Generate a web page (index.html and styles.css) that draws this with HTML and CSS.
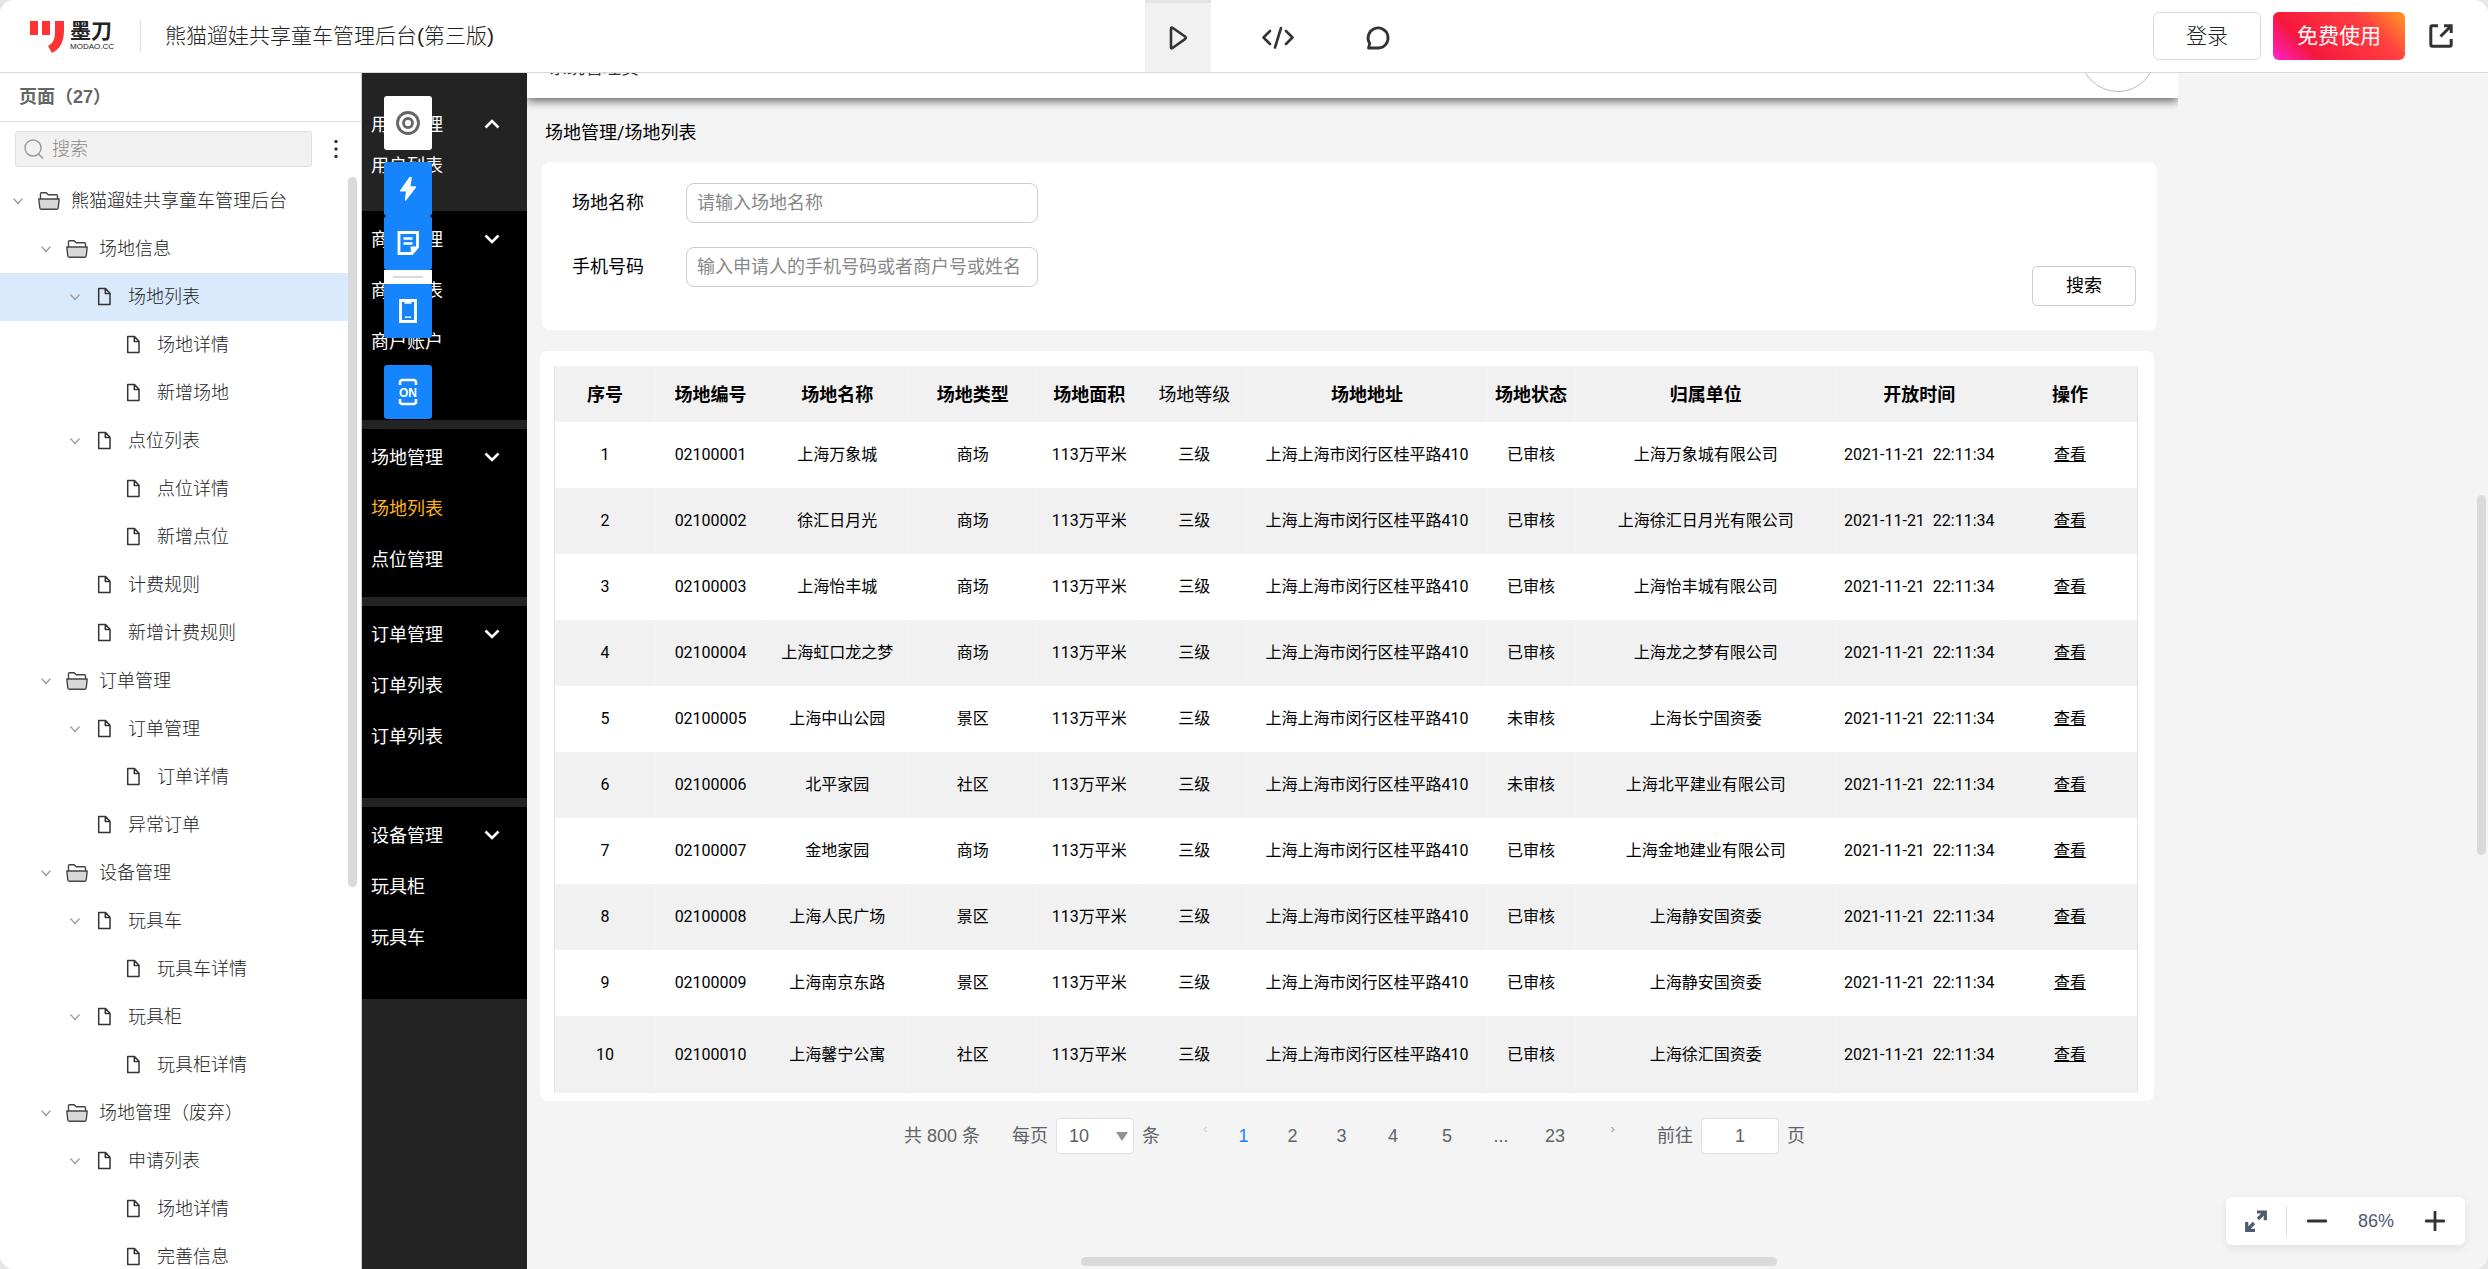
FILE: index.html
```html
<!DOCTYPE html>
<html lang="zh-CN">
<head>
<meta charset="utf-8">
<title>熊猫遛娃共享童车管理后台(第三版)</title>
<link rel="stylesheet" href="styles.css">
</head>
<body>
<svg class="sprite" aria-hidden="true">
  <symbol id="chevron" viewBox="0 0 12 12"><path d="M1.500 3.500 6 8.500l4.500-5" fill="none" stroke="#999" stroke-width="1.200"/></symbol>
  <symbol id="folder" viewBox="0 0 22 22"><path d="M2.500 9V3.800q0-1 1-1h4.700l2 2h8.300q1 0 1 1V9" fill="#fff" stroke="#444" stroke-width="1.400"/><path d="M.8 9h20.400l-1 9q-.2 1.200-1.400 1.200H3.200Q2 19.200 1.800 18z" fill="#d8d8d8" stroke="#444" stroke-width="1.400" stroke-linejoin="round"/></symbol>
  <symbol id="file" viewBox="0 0 22 22"><path d="M3.700 2.500h6.800L15 7.200v11.300H3.700zM10.300 2.500v5H15" fill="none" stroke="#333" stroke-width="1.500" stroke-linejoin="round"/></symbol>
  <symbol id="caret" viewBox="0 0 18 18"><path d="M2.500 4.500 9 11l6.500-6.500" fill="none" stroke="#fff" stroke-width="2.600"/></symbol>
  <symbol id="caret-up" viewBox="0 0 18 18"><path d="M2.500 11.500 9 5l6.500 6.500" fill="none" stroke="#fff" stroke-width="2.600"/></symbol>
</svg>
<div class="app">
  <header class="topbar">
    <div class="brand">
      <svg class="mark" width="34" height="33" viewBox="0 0 34 33"><path fill="#ff3333" d="M0 1h8v14H0zM12 1h8v14h-8zM25 1h9v9c0 12-4 19-12 23l-4-7c6-3 7-8 7-16z"/></svg>
      <div class="wordmark"><span class="word-cn">墨刀</span><span class="word-en">MODAO.CC</span></div>
      <h1 class="title">熊猫遛娃共享童车管理后台(第三版)</h1>
    </div>
    <nav class="modes">
      <button class="mode mode-active" aria-label="预览"><svg width="24" height="26" viewBox="0 0 24 26"><path d="M5 3.500q0-1.500 1.500-.8L19 11.500q1.500 1.200 0 2.600L6.500 23Q5 24 5 22.500z" fill="none" stroke="#333" stroke-width="2.600" stroke-linejoin="round"/></svg></button>
      <button class="mode" aria-label="代码"><svg width="34" height="26" viewBox="0 0 34 26"><path d="M9 6 2.500 12.500 9 19M25 6l6.500 6.500L25 19M20 3l-6 19.500" fill="none" stroke="#333" stroke-width="2.600" stroke-linecap="round" stroke-linejoin="round"/></svg></button>
      <button class="mode" aria-label="评论"><svg width="26" height="26" viewBox="0 0 26 26"><path d="M3.500 23 4.700 18.500A10 10 0 1 1 13.500 23z" fill="none" stroke="#333" stroke-width="2.800" stroke-linejoin="round"/></svg></button>
    </nav>
    <div class="account">
      <button class="login">登录</button>
      <button class="trial">免费使用</button>
      <button class="open" aria-label="新窗口打开"><svg width="24" height="24" viewBox="0 0 24 24"><path d="M9 1.800H3.300q-1.500 0-1.500 1.500v17.400q0 1.500 1.500 1.500h17.400q1.500 0 1.500-1.500V15M15 1.800h7.200V9M22 2 11.500 12.500" fill="none" stroke="#333" stroke-width="3"/></svg></button>
    </div>
  </header>

  <div class="body">
    <aside class="pages">
      <h2 class="pages-title">页面（27）</h2>
      <div class="pages-search">
        <label class="search-box">
          <svg width="20" height="20" viewBox="0 0 20 20"><circle cx="9" cy="9" r="8" fill="none" stroke="#999" stroke-width="1.400"/><path d="m14.500 15 4.500 4.500" stroke="#999" stroke-width="1.600"/></svg>
          <input type="text" placeholder="搜索" aria-label="搜索">
        </label>
        <button class="more" aria-label="更多"><svg width="4" height="20" viewBox="0 0 4 20"><g fill="#333"><circle cx="2" cy="2.500" r="1.700"/><circle cx="2" cy="10" r="1.700"/><circle cx="2" cy="17.500" r="1.700"/></g></svg></button>
      </div>
      <div class="tree-wrap">
        <ul class="tree">
          <li class="row l0"><svg class="chev"><use href="#chevron"/></svg><svg class="ico"><use href="#folder"/></svg>熊猫遛娃共享童车管理后台</li>
          <li class="row l1"><svg class="chev"><use href="#chevron"/></svg><svg class="ico"><use href="#folder"/></svg>场地信息</li>
          <li class="row l2 selected"><svg class="chev"><use href="#chevron"/></svg><svg class="ico"><use href="#file"/></svg>场地列表</li>
          <li class="row l3"><svg class="chev"></svg><svg class="ico"><use href="#file"/></svg>场地详情</li>
          <li class="row l3"><svg class="chev"></svg><svg class="ico"><use href="#file"/></svg>新增场地</li>
          <li class="row l2"><svg class="chev"><use href="#chevron"/></svg><svg class="ico"><use href="#file"/></svg>点位列表</li>
          <li class="row l3"><svg class="chev"></svg><svg class="ico"><use href="#file"/></svg>点位详情</li>
          <li class="row l3"><svg class="chev"></svg><svg class="ico"><use href="#file"/></svg>新增点位</li>
          <li class="row l2"><svg class="chev"></svg><svg class="ico"><use href="#file"/></svg>计费规则</li>
          <li class="row l2"><svg class="chev"></svg><svg class="ico"><use href="#file"/></svg>新增计费规则</li>
          <li class="row l1"><svg class="chev"><use href="#chevron"/></svg><svg class="ico"><use href="#folder"/></svg>订单管理</li>
          <li class="row l2"><svg class="chev"><use href="#chevron"/></svg><svg class="ico"><use href="#file"/></svg>订单管理</li>
          <li class="row l3"><svg class="chev"></svg><svg class="ico"><use href="#file"/></svg>订单详情</li>
          <li class="row l2"><svg class="chev"></svg><svg class="ico"><use href="#file"/></svg>异常订单</li>
          <li class="row l1"><svg class="chev"><use href="#chevron"/></svg><svg class="ico"><use href="#folder"/></svg>设备管理</li>
          <li class="row l2"><svg class="chev"><use href="#chevron"/></svg><svg class="ico"><use href="#file"/></svg>玩具车</li>
          <li class="row l3"><svg class="chev"></svg><svg class="ico"><use href="#file"/></svg>玩具车详情</li>
          <li class="row l2"><svg class="chev"><use href="#chevron"/></svg><svg class="ico"><use href="#file"/></svg>玩具柜</li>
          <li class="row l3"><svg class="chev"></svg><svg class="ico"><use href="#file"/></svg>玩具柜详情</li>
          <li class="row l1"><svg class="chev"><use href="#chevron"/></svg><svg class="ico"><use href="#folder"/></svg>场地管理（废弃）</li>
          <li class="row l2"><svg class="chev"><use href="#chevron"/></svg><svg class="ico"><use href="#file"/></svg>申请列表</li>
          <li class="row l3"><svg class="chev"></svg><svg class="ico"><use href="#file"/></svg>场地详情</li>
          <li class="row l3"><svg class="chev"></svg><svg class="ico"><use href="#file"/></svg>完善信息</li>
        </ul>
        <div class="tree-bar"></div>
      </div>
    </aside>

    <nav class="menu">
      <ul class="group group-open">
        <li class="group-title">用户管理<svg class="caret"><use href="#caret-up"/></svg></li>
        <li>用户列表</li>
      </ul>
      <ul class="group group-merchant">
        <li class="group-title">商户管理<svg class="caret"><use href="#caret"/></svg></li>
        <li>商户列表</li>
        <li>商户账户</li>
      </ul>
      <ul class="group group-site">
        <li class="group-title">场地管理<svg class="caret"><use href="#caret"/></svg></li>
        <li class="current">场地列表</li>
        <li>点位管理</li>
      </ul>
      <ul class="group">
        <li class="group-title">订单管理<svg class="caret"><use href="#caret"/></svg></li>
        <li>订单列表</li>
        <li>订单列表</li>
      </ul>
      <ul class="group">
        <li class="group-title">设备管理<svg class="caret"><use href="#caret"/></svg></li>
        <li>玩具柜</li>
        <li>玩具车</li>
      </ul>
    </nav>

    <main class="canvas">
      <div class="artboard">
        <div class="strip"><span class="role">系统管理员</span><span class="avatar"></span></div>
        <p class="crumb">场地管理/场地列表</p>
        <form class="filter">
          <div class="fields">
            <div class="field"><label for="site">场地名称</label><input id="site" type="text" placeholder="请输入场地名称"></div>
            <div class="field"><label for="phone">手机号码</label><input id="phone" type="text" placeholder="输入申请人的手机号码或者商户号或姓名"></div>
          </div>
          <button type="button" class="find">搜索</button>
        </form>
        <section class="card">
          <table>
            <colgroup><col class="c1"><col class="c2"><col class="c3"><col class="c4"><col class="c5"><col class="c5"><col class="c7"><col class="c8"><col class="c9"><col class="c10"><col class="c11"></colgroup>
            <thead><tr><th>序号</th><th>场地编号</th><th>场地名称</th><th>场地类型</th><th>场地面积</th><th class="plain">场地等级</th><th>场地地址</th><th>场地状态</th><th>归属单位</th><th>开放时间</th><th>操作</th></tr></thead>
            <tbody>
              <tr><td>1</td><td>02100001</td><td>上海万象城</td><td>商场</td><td>113万平米</td><td>三级</td><td>上海上海市闵行区桂平路410</td><td>已审核</td><td>上海万象城有限公司</td><td>2021-11-21&nbsp; 22:11:34</td><td><a href="#">查看</a></td></tr>
              <tr><td>2</td><td>02100002</td><td>徐汇日月光</td><td>商场</td><td>113万平米</td><td>三级</td><td>上海上海市闵行区桂平路410</td><td>已审核</td><td>上海徐汇日月光有限公司</td><td>2021-11-21&nbsp; 22:11:34</td><td><a href="#">查看</a></td></tr>
              <tr><td>3</td><td>02100003</td><td>上海怡丰城</td><td>商场</td><td>113万平米</td><td>三级</td><td>上海上海市闵行区桂平路410</td><td>已审核</td><td>上海怡丰城有限公司</td><td>2021-11-21&nbsp; 22:11:34</td><td><a href="#">查看</a></td></tr>
              <tr><td>4</td><td>02100004</td><td>上海虹口龙之梦</td><td>商场</td><td>113万平米</td><td>三级</td><td>上海上海市闵行区桂平路410</td><td>已审核</td><td>上海龙之梦有限公司</td><td>2021-11-21&nbsp; 22:11:34</td><td><a href="#">查看</a></td></tr>
              <tr><td>5</td><td>02100005</td><td>上海中山公园</td><td>景区</td><td>113万平米</td><td>三级</td><td>上海上海市闵行区桂平路410</td><td>未审核</td><td>上海长宁国资委</td><td>2021-11-21&nbsp; 22:11:34</td><td><a href="#">查看</a></td></tr>
              <tr><td>6</td><td>02100006</td><td>北平家园</td><td>社区</td><td>113万平米</td><td>三级</td><td>上海上海市闵行区桂平路410</td><td>未审核</td><td>上海北平建业有限公司</td><td>2021-11-21&nbsp; 22:11:34</td><td><a href="#">查看</a></td></tr>
              <tr><td>7</td><td>02100007</td><td>金地家园</td><td>商场</td><td>113万平米</td><td>三级</td><td>上海上海市闵行区桂平路410</td><td>已审核</td><td>上海金地建业有限公司</td><td>2021-11-21&nbsp; 22:11:34</td><td><a href="#">查看</a></td></tr>
              <tr><td>8</td><td>02100008</td><td>上海人民广场</td><td>景区</td><td>113万平米</td><td>三级</td><td>上海上海市闵行区桂平路410</td><td>已审核</td><td>上海静安国资委</td><td>2021-11-21&nbsp; 22:11:34</td><td><a href="#">查看</a></td></tr>
              <tr><td>9</td><td>02100009</td><td>上海南京东路</td><td>景区</td><td>113万平米</td><td>三级</td><td>上海上海市闵行区桂平路410</td><td>已审核</td><td>上海静安国资委</td><td>2021-11-21&nbsp; 22:11:34</td><td><a href="#">查看</a></td></tr>
              <tr><td>10</td><td>02100010</td><td>上海馨宁公寓</td><td>社区</td><td>113万平米</td><td>三级</td><td>上海上海市闵行区桂平路410</td><td>已审核</td><td>上海徐汇国资委</td><td>2021-11-21&nbsp; 22:11:34</td><td><a href="#">查看</a></td></tr>
            </tbody>
          </table>
        </section>
        <div class="pager">
          <span class="total">共 800 条</span>
          <label for="size">每页</label>
          <span class="select"><select id="size"><option>10</option></select></span>
          <span>条</span>
          <div class="numbers">
            <button class="arrow prev" aria-label="上一页"><svg width="6" height="10" viewBox="0 0 6 10"><path d="M4.500 1 2 3.500 4.500 6" fill="none" stroke="#bbb"/></svg></button>
            <button class="num on">1</button><button class="num">2</button><button class="num">3</button><button class="num wide">4</button><button class="num wide">5</button><span class="num wide">...</span><button class="num wide">23</button>
            <button class="arrow next" aria-label="下一页"><svg width="6" height="10" viewBox="0 0 6 10"><path d="M1.500 1 4 3.500 1.500 6" fill="none" stroke="#777"/></svg></button>
          </div>
          <label for="goto">前往</label>
          <input id="goto" class="goto" type="text" value="1">
          <span>页</span>
        </div>
      </div>
      <div class="bar-x"></div>
      <div class="bar-y"></div>
      <div class="zoom">
        <button class="fit" aria-label="全屏"><svg width="22" height="22" viewBox="0 0 22 22"><path d="M12 2h8.300v8.300M19.500 2.500 13 9M10 20.300H1.700V12M2.500 19.500 9 13" fill="none" stroke="#4d5b70" stroke-width="3.200"/></svg></button>
        <button class="step" aria-label="缩小"><svg width="20" height="20" viewBox="0 0 20 20"><path d="M1 10h18" stroke="#333" stroke-width="2.800" stroke-linecap="round"/></svg></button>
        <span class="percent">86%</span>
        <button class="step" aria-label="放大"><svg width="20" height="20" viewBox="0 0 20 20"><path d="M1 10h18M10 1v18" stroke="#333" stroke-width="2.800" stroke-linecap="round"/></svg></button>
      </div>
    </main>

    <div class="tools">
      <button class="tool tool-white" aria-label="定位"><svg width="26" height="26" viewBox="0 0 26 26" fill="none" stroke="#666"><circle cx="13" cy="13" r="10.500" stroke-width="2.800"/><circle cx="13" cy="13" r="4.500" stroke-width="2.800"/></svg></button>
      <div class="tool-set">
        <button class="tool" aria-label="交互"><svg width="26" height="26" viewBox="0 0 26 26"><path d="M14.500 1 5 14.500q-.5 1 .6 1H11L9.800 23.800q.2 1.700 1.400.5L21 11.500q.6-1.200-.6-1.200H15.500L16.800 2q-.2-2-2.300-1z" fill="#fff"/></svg></button>
        <button class="tool" aria-label="备注"><svg width="26" height="26" viewBox="0 0 26 26"><path d="M4 2.500h18.500V17L17 23.500H4z" fill="none" stroke="#fff" stroke-width="2.800"/><path d="M8.500 8.500h9M8.500 13.500h9" stroke="#fff" stroke-width="2.400"/><path d="M15.500 16.500h7l-6.500 7z" fill="#fff"/></svg></button>
        <div class="tool-rule"></div>
        <button class="tool" aria-label="设备"><svg width="26" height="26" viewBox="0 0 26 26"><path d="M5.500 2.500h15v21h-15z" fill="none" stroke="#fff" stroke-width="2.800"/><path d="M9.500 3h7v2.800h-7zM10 18.500h6v1.500h-6z" fill="#fff"/></svg></button>
      </div>
      <button class="tool" aria-label="开关"><svg width="20" height="28" viewBox="0 0 20 28"><path d="M2 7V4.500Q2 2 4.500 2h11Q18 2 18 4.500V7M2 21v2.500Q2 26 4.500 26h11q2.500 0 2.500-2.500V21" fill="none" stroke="#fff" stroke-width="2.600"/><text x="10" y="18.500" text-anchor="middle" class="on-text">ON</text></svg></button>
    </div>
  </div>
</div>
</body>
</html>
```

FILE: styles.css
```css
* { box-sizing: border-box; }
html, body { height: 100%; }
body {
  margin: 0;
  background: #e6e6e6;
  color: #222;
  font: 300 18px/24px "Liberation Sans", "Noto Sans CJK SC", sans-serif;
}
ul { list-style: none; margin: 0; padding: 0; }
h1, h2, p { margin: 0; }
button, input, select { font: inherit; color: inherit; }
button { border: 0; padding: 0; background: none; cursor: pointer; }
svg { flex: none; display: block; }
.sprite { position: absolute; width: 0; height: 0; }

.app {
  height: 100vh;
  display: flex;
  flex-direction: column;
  overflow: hidden;
  border-radius: 14px;
  background: #f4f4f4;
}

/* top bar */
.topbar {
  flex: none;
  display: grid;
  grid-template-columns: 1fr auto 1fr;
  height: 73px;
  background: #fff;
  border-bottom: 1px solid #d9d9d9;
}
.brand { display: flex; align-items: center; padding-left: 30px; }
.wordmark { display: flex; flex-direction: column; width: 71px; height: 32px; margin-left: 6px; border-right: 1px solid #e0e0e0; }
.word-cn { font-size: 21px; line-height: 22px; font-weight: 700; }
.word-en { font-size: 8px; line-height: 10px; font-weight: 400; }
.title { margin-left: 24px; font-size: 21px; line-height: 32px; font-weight: 300; }
.modes { display: flex; gap: 34px; margin-left: 68px; }
.mode { width: 66px; display: flex; align-items: center; justify-content: center; padding-top: 3px; }
.mode-active { background: #f1f1f1; border-top: 3px solid #e4e4e4; padding-top: 0; }
.account { display: flex; align-items: center; justify-content: flex-end; gap: 12px; padding-right: 35px; }
.login, .trial { height: 48px; border-radius: 6px; font-size: 21px; }
.login { width: 108px; border: 1px solid #d9d9d9; }
.trial { width: 132px; color: #fff; font-weight: 400; background: linear-gradient(45deg, #ff22cc 0%, #f5173d 26%, #ff4040 72%, #ff9a20 100%); }
.open { margin-left: 12px; }

.body { position: relative; flex: 1; min-height: 0; display: flex; }

/* page tree */
.pages { flex: none; width: 362px; display: flex; flex-direction: column; background: #fff; border-right: 1px solid #ccc; }
.pages-title { height: 49px; padding-left: 19px; font-size: 18px; line-height: 48px; font-weight: 700; color: #666; border-bottom: 1px solid #e0e0e0; }
.pages-search { display: flex; align-items: center; padding: 9px 23px 10px 15px; }
.search-box { flex: 1; display: flex; align-items: center; gap: 8px; height: 36px; padding-left: 8px; background: #f1f1f1; border: 1px solid #e0e0e0; border-radius: 3px; }
.search-box input { width: 200px; border: 0; padding: 0; background: none; outline: 0; }
.search-box input::placeholder { color: #888; }
.more { margin-left: 22px; }
.tree-wrap { flex: 1; min-height: 0; display: flex; overflow: hidden; }
.tree { flex: 1; }
.tree-bar { width: 9px; height: 65%; margin-right: 4px; border-radius: 5px; background: #dadada; }
.row { display: flex; align-items: center; height: 48px; white-space: nowrap; }
.selected { background: #d9eafd; }
.l0 { padding-left: 12px; }
.l1 { padding-left: 40px; }
.l2 { padding-left: 69px; }
.l3 { padding-left: 98px; }
.chev { width: 12px; height: 12px; margin-right: 14px; }
.ico { width: 22px; height: 22px; margin-right: 11px; }

/* prototype menu */
.menu { flex: none; width: 165px; background: #232323; color: #fff; font-weight: 400; }
.group { padding: 3px 0 36px; margin-bottom: 9px; background: #000; }
.group li { display: flex; align-items: center; height: 51px; padding: 0 26px 0 9px; }
.group-title { justify-content: space-between; }
.group-open { padding: 31px 0 25px; margin: 0; background: #232323; }
.group-open li { height: 41px; }
.group-merchant { padding-bottom: 53px; }
.group-site { padding-bottom: 12px; }
.group .current { color: #fbb319; }
.caret { width: 18px; height: 18px; }

/* floating tools */
.tools { position: absolute; left: 384px; top: 23px; display: flex; flex-direction: column; }
.tool { display: flex; align-items: center; justify-content: center; width: 48px; height: 54px; background: #1684fc; border-radius: 3px; }
.tool-white { background: #fff; }
.tool-set { margin: 12px 0 27px; }
.tool-rule { height: 14px; padding: 6px 9px; background: #fff; }
.tool-rule::before { content: ""; display: block; height: 2px; background: #d9d9d9; }
.on-text { font: 700 12px "Liberation Sans", sans-serif; fill: #fff; }

/* canvas */
.canvas { position: relative; flex: 1; min-width: 0; overflow: hidden; }
.artboard { margin-right: 310px; overflow: hidden; color: #000; font-weight: 400; }
.strip { display: flex; align-items: flex-end; justify-content: space-between; height: 25px; padding: 0 22px; background: #fff; box-shadow: 0 3px 10px rgba(0, 0, 0, .6); }
.role { line-height: 24px; margin-bottom: 18px; color: #333; }
.avatar { flex: none; width: 76px; height: 76px; margin-bottom: 6px; border: 1px solid #bbb; border-radius: 50%; }
.crumb { padding: 23px 18px 17px; font-family: Roboto, "Noto Sans CJK SC", sans-serif; }
.filter { display: flex; align-items: flex-end; justify-content: space-between; margin: 0 21px 21px 15px; padding: 21px 21px 24px 30px; background: #fff; border-radius: 8px; }
.fields { display: flex; flex-direction: column; gap: 24px; padding-bottom: 19px; }
.field { display: flex; align-items: center; }
.field label { width: 114px; }
.field input { width: 352px; height: 40px; padding: 0 10px; border: 1px solid #ccc; border-radius: 8px; }
.field input::placeholder { color: #888; }
.find { width: 104px; height: 40px; background: #fff; border: 1px solid #ccc; border-radius: 5px; }
.card { margin: 0 24px 0 13px; padding: 15px 16px 8px 14px; background: #fff; border-radius: 8px; }
table { width: 100%; table-layout: fixed; border-collapse: separate; border-spacing: 0; border: 1px solid #e2e2e2; border-width: 0 1px; text-align: center; font-size: 16px; white-space: nowrap; }
th, td { height: 66px; padding: 0; border-right: 1px solid #f4f4f4; }
td { border-color: transparent; font-family: Roboto, "Noto Sans CJK SC", sans-serif; }
tr > :last-child { border-right: 0; }
th { height: 56px; padding-top: 2px; font-size: 18px; font-weight: 700; background: #f1f1f1; }
th.plain { font-weight: 400; }
tbody tr:nth-child(even) td { background: #f1f1f1; border-color: #f4f4f4; }
tbody tr:last-child td { height: 77px; }
td a { color: inherit; }
.c1 { width: 101px; } .c2 { width: 110px; } .c3 { width: 143px; } .c4 { width: 128px; }
.c5 { width: 105px; } .c8 { width: 88px; } .c7 { width: 240px; }
.c9 { width: 261px; } .c10 { width: 166px; } .c11 { width: 134px; }

.pager { display: flex; align-items: center; justify-content: center; gap: 8px; height: 70px; padding-left: 4px; color: #606266; }
.total { margin-right: 24px; }
.select { position: relative; }
.select::after { content: ""; position: absolute; right: 6px; top: 14px; border: 6px solid transparent; border-top: 9px solid #8f9399; border-bottom: 0; }
.select select, .goto { width: 78px; height: 36px; background: #fff; border: 1px solid #dfe1e6; border-radius: 4px; }
.select select { display: block; appearance: none; padding: 0 12px; }
.goto { text-align: center; }
.numbers { display: flex; align-items: center; margin: 0 31px 0 34px; }
.num { width: 49px; text-align: center; }
.wide { width: 54px; }
.on { color: #1684fc; }
.arrow { display: flex; align-items: flex-start; height: 20px; }
.prev { width: 17px; }
.next { width: 36px; padding-left: 28px; }

.bar-x { position: absolute; left: 554px; right: 711px; bottom: 3px; height: 9px; border-radius: 5px; background: #dadada; }
.bar-y { position: absolute; right: 2px; top: 422px; width: 9px; height: 360px; border-radius: 5px; background: #dadada; }
.zoom { position: absolute; right: 23px; bottom: 24px; display: flex; align-items: center; width: 239px; height: 48px; background: #fff; border-radius: 6px; box-shadow: 0 3px 10px rgba(0, 0, 0, .08); }
.fit { width: 61px; height: 30px; padding-left: 19px; border-right: 1px solid #e0e0e0; }
.step { display: flex; width: 60px; justify-content: center; }
.percent { flex: 1; text-align: center; color: #4d5b70; }
```
